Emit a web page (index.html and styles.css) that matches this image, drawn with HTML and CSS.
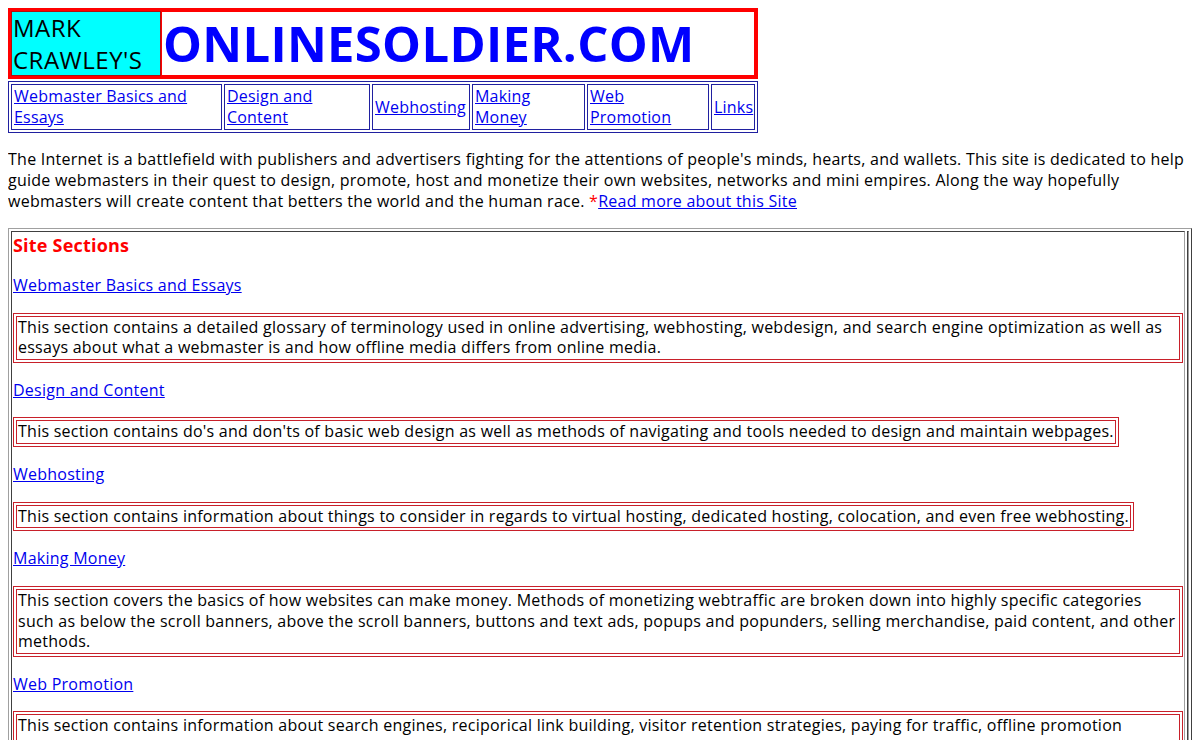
FILE: index.html
```html
<!DOCTYPE html>
<html>
<head>
<meta charset="utf-8">
<title>Mark Crawley's OnlineSoldier.com</title>
<link rel="stylesheet" href="styles.css">
</head>
<body>
<div class="header">
  <div class="byline">MARK CRAWLEY'S</div>
  <div class="title">ONLINESOLDIER.COM</div>
</div>
<div class="nav">
  <div class="nav-cell"><a href="#">Webmaster Basics and Essays</a></div>
  <div class="nav-cell"><a href="#">Design and Content</a></div>
  <div class="nav-cell"><a href="#">Webhosting</a></div>
  <div class="nav-cell"><a href="#">Making Money</a></div>
  <div class="nav-cell"><a href="#">Web Promotion</a></div>
  <div class="nav-cell"><a href="#">Links</a></div>
</div>
<p class="intro">The Internet is a battlefield with publishers and advertisers fighting for the attentions of people's minds, hearts, and wallets. This site is dedicated to help guide webmasters in their quest to design, promote, host and monetize their own websites, networks and mini empires. Along the way hopefully webmasters will create content that betters the world and the human race. <span class="star">*</span><a href="#">Read more about this Site</a></p>
<div class="sections">
  <div class="sections-main">
    <div class="sections-title">Site Sections</div>
    <p class="sec-link"><a href="#">Webmaster Basics and Essays</a></p>
    <div class="desc"><div class="desc-inner">This section contains a detailed glossary of terminology used in online advertising, webhosting, webdesign, and search engine optimization as well as essays about what a webmaster is and how offline media differs from online media.</div></div>
    <p class="sec-link"><a href="#">Design and Content</a></p>
    <div class="desc"><div class="desc-inner">This section contains do's and don'ts of basic web design as well as methods of navigating and tools needed to design and maintain webpages.</div></div>
    <p class="sec-link"><a href="#">Webhosting</a></p>
    <div class="desc"><div class="desc-inner">This section contains information about things to consider in regards to virtual hosting, dedicated hosting, colocation, and even free webhosting.</div></div>
    <p class="sec-link"><a href="#">Making Money</a></p>
    <div class="desc"><div class="desc-inner">This section covers the basics of how websites can make money. Methods of monetizing webtraffic are broken down into highly specific categories such as below the scroll banners, above the scroll banners, buttons and text ads, popups and popunders, selling merchandise, paid content, and other methods.</div></div>
    <p class="sec-link"><a href="#">Web Promotion</a></p>
    <div class="desc"><div class="desc-inner">This section contains information about search engines, reciporical link building, visitor retention strategies, paying for traffic, offline promotion methods, and other ways of bringing visitors to a website.</div></div>
    <p class="sec-link"><a href="#">Links</a></p>
    <div class="desc"><div class="desc-inner">This section contains links to other helpful webmaster resources.</div></div>
  </div>
  <div class="sections-empty"></div>
</div>
</body>
</html>
```

FILE: styles.css
```css
body {
  margin: 8px;
  font-family: "Open Sans", "Noto Sans", sans-serif;
  font-size: 16px;
  letter-spacing: 0.25px;
  line-height: 21px;
  color: #000;
  background: #fff;
}

a {
  color: #0000ee;
}

.header {
  display: flex;
  width: 750px;
  box-sizing: border-box;
  border: 3px solid #ff0000;
}

.byline {
  width: 150px;
  box-sizing: border-box;
  background: #00ffff;
  border: 1px solid #b01010;
  padding: 0 1px;
  font-size: 24px;
  letter-spacing: 0.5px;
  line-height: 31.5px;
}

.title {
  flex: 1;
  display: flex;
  align-items: center;
  border: 1px solid #ff0000;
  padding-left: 1px;
  font-size: 49px;
  letter-spacing: 0.3px;
  font-weight: 700;
  color: #0000ff;
  line-height: 63px;
}

.nav {
  display: grid;
  grid-template-columns: 211px 146px 98px 113px 122px 44px;
  gap: 2px;
  padding: 2px;
  margin-top: 2px;
  width: 750px;
  box-sizing: border-box;
  border: 1px solid #2020a0;
}

.nav-cell {
  display: flex;
  align-items: center;
  border: 1px solid #2020a0;
  padding: 1px 2px;
  line-height: 21px;
  letter-spacing: 0.2px;
}

.intro {
  margin: 16px 0;
}

.star {
  color: #ff0000;
}

.sections {
  display: flex;
  padding: 2px;
  gap: 2px;
  border: 1px solid;
  border-color: #a0a0a0 #404040 #404040 #a0a0a0;
}

.sections-main {
  flex: 1;
  min-width: 0;
  padding: 1px;
  border: 1px solid;
  border-color: #404040 #a0a0a0 #a0a0a0 #404040;
}

.sections-empty {
  width: 0;
  border: 1px solid;
  border-color: #404040 #a0a0a0 #a0a0a0 #404040;
}

.sections-title {
  color: #ff0000;
  font-weight: 700;
  font-size: 18px;
  letter-spacing: 0.2px;
  line-height: 25px;
}

.sec-link {
  margin: 16px 0;
  line-height: 22.5px;
}

.desc {
  width: fit-content;
  max-width: 100%;
  box-sizing: border-box;
  padding: 2px;
  border: 1px solid #c8202a;
}

.desc-inner {
  border: 1px solid #c8202a;
  padding: 0 1px 1px;
  line-height: 20.7px;
}
```
